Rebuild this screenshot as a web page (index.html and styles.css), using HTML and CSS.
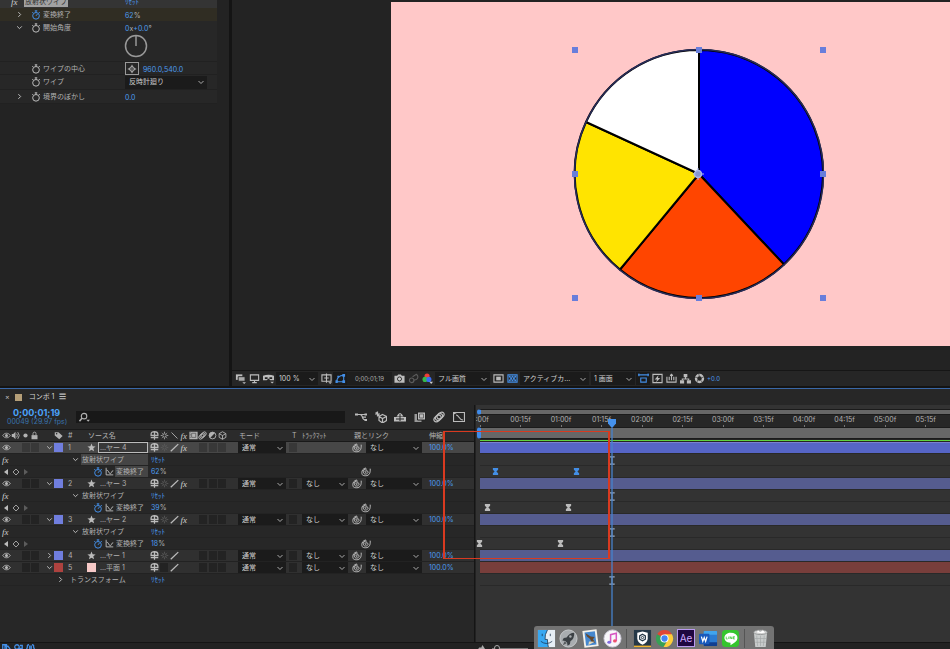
FILE: index.html
```html
<!DOCTYPE html>
<html lang="ja">
<head>
<meta charset="utf-8">
<meta name="viewport" content="width=device-width, initial-scale=1">
<title>コンポ 1</title>
<link rel="stylesheet" href="styles.css">
</head>
<body>
<svg class="sprite" aria-hidden="true">
  <symbol id="right" viewBox="0 0 12 12"><path d="M4 2l4 4-4 4" class="ln bold"/></symbol>
  <symbol id="down" viewBox="0 0 12 12"><path d="M2 4l4 4 4-4" class="ln bold"/></symbol>
  <symbol id="watch" viewBox="0 0 12 12"><circle cx="6" cy="7" r="4" class="ln"/><path d="M4.500 1h3M6 1v2M9.500 2.500l1.200 1.200M1.500 3.500l1-1" class="ln"/></symbol>
  <symbol id="watch-on" viewBox="0 0 12 12"><circle cx="6" cy="7" r="4" class="ln"/><path d="M4.500 1h3M6 1v2M9.500 2.500l1.200 1.200M1.500 3.500l1-1M6 7l2-2.500" class="ln"/></symbol>
  <symbol id="graph" viewBox="0 0 12 12"><path d="M1.500 1v9.500H11M2 4c3 0 3 5 5 5s1-4 4-4" class="ln"/></symbol>
  <symbol id="target" viewBox="0 0 12 12"><circle cx="6" cy="6" r="2.800" class="ln"/><circle cx="6" cy="6" r=".8" fill="currentColor"/><path d="M6 1v3M6 8v3M1 6h3M8 6h3" class="ln"/></symbol>
  <symbol id="eye" viewBox="0 0 12 12"><path d="M1 6c2.500-4 7.500-4 10 0-2.500 4-7.500 4-10 0z" class="ln"/><circle cx="6" cy="6" r="2" fill="currentColor"/></symbol>
  <symbol id="sound" viewBox="0 0 12 12"><path d="M1 4h2l3-3v10L3 8H1z" fill="currentColor"/><path d="M7.500 3.500q2 2.500 0 5M9 1.500q4 4.500 0 9" class="ln"/></symbol>
  <symbol id="dot" viewBox="0 0 12 12"><circle cx="6" cy="6" r="2.800" fill="currentColor"/></symbol>
  <symbol id="lock" viewBox="0 0 12 12"><path d="M2 5.500h8V11H2z" fill="currentColor"/><path d="M4 6V3.500a2 2 0 0 1 4 0V6" class="ln"/></symbol>
  <symbol id="tag" viewBox="0 0 12 12"><path d="M1 1.500h5l5.500 5L7 11 1 6z" fill="currentColor"/><circle cx="3.500" cy="3.700" r="1" fill="#222"/></symbol>
  <symbol id="star" viewBox="0 0 12 12"><path d="M6 0.500l1.500 3.800 4 .2-3.100 2.600 1 4L6 8.900 2.600 11.100l1-4L.5 4.500l4-.2z" fill="currentColor"/></symbol>
  <symbol id="shy" viewBox="0 0 12 12"><path d="M1.500 6V4Q1.500 1 6 1t4.500 3v2z" class="ln bold"/><path d="M6 1v10.500M1 8.700h10" class="ln bold"/></symbol>
  <symbol id="sun" viewBox="0 0 12 12"><circle cx="6" cy="6" r="2.300" class="ln"/><path d="M6 1v1.500M6 9.500V11M1 6h1.500M9.500 6H11M2.500 2.500l1 1M8.500 8.500l1 1M9.500 2.500l-1 1M3.500 8.500l-1 1" class="ln"/></symbol>
  <symbol id="back" viewBox="0 0 12 12"><path d="M2 2l8 8" class="ln"/></symbol>
  <symbol id="slash" viewBox="0 0 12 12"><path d="M1 11L11 1.500" class="ln bold"/></symbol>
  <symbol id="film" viewBox="0 0 12 12"><path d="M.5 1h11v10H.5z" fill="currentColor"/><path d="M3.500 3h5.500v5.500H3.500z" fill="none" stroke="#555"/><path d="M1.700 2v8" stroke="#444" stroke-dasharray="1 1"/></symbol>
  <symbol id="blur" viewBox="0 0 12 12"><g class="ln"><ellipse cx="7.500" cy="4.500" rx="4" ry="2.600" transform="rotate(-40 7.500 4.500)"/><ellipse cx="6" cy="6" rx="4" ry="2.600" transform="rotate(-40 6 6)"/><ellipse cx="4.500" cy="7.500" rx="4" ry="2.600" transform="rotate(-40 4.500 7.500)"/></g></symbol>
  <symbol id="adjust" viewBox="0 0 12 12"><circle cx="6" cy="6" r="4.500" class="ln"/><path d="M9.200 2.800A4.500 4.500 0 0 0 2.800 9.200z" fill="currentColor"/></symbol>
  <symbol id="cube" viewBox="0 0 12 12"><path d="M6 1l4.500 2.500v5L6 11 1.500 8.500v-5zM1.500 3.500L6 6l4.500-2.500M6 6v5" class="ln"/></symbol>
  <symbol id="spiral" viewBox="0 0 12 12"><path d="M6.500 6.200C5.500 7.200 4 6 5 5s4-.5 3.500 1.500S4 9.500 3 7 4 2 7 2.500M11 2c.5 5-1 8.500-5.500 8.500S1 8.500 1 6.500 2.500 1.500 6 1.200" class="ln"/></symbol>
  <symbol id="key" viewBox="0 0 8 8"><path d="M1 0h6v2L5 4l2 2v2H1V6l2-2-2-2z" fill="currentColor"/></symbol>
  <symbol id="ibeam" viewBox="0 0 6 10"><path d="M0 1h6M3 1v8M0 9h6" class="ln"/></symbol>
  <symbol id="prev" viewBox="0 0 12 12"><path d="M9 1.500v9L3 6z" fill="currentColor"/></symbol>
  <symbol id="next" viewBox="0 0 12 12"><path d="M3 1.500v9L9 6z" fill="currentColor"/></symbol>
  <symbol id="diamond" viewBox="0 0 12 12"><path d="M6 1.500L10.500 6 6 10.500 1.500 6z" class="ln"/></symbol>
</svg>

<main class="workspace">
  <section class="effects" aria-label="エフェクトコントロール">
    <div class="fx-list">
      <div class="fx-row fx-title"><i class="fx">fx</i><strong>放射状ワイプ</strong><button class="reset">ﾘｾｯﾄ</button></div>
      <div class="fx-row picked"><button aria-label="展開"><svg class="i7"><use href="#right"/></svg></button><button class="on" aria-label="ストップウォッチ"><svg class="i10"><use href="#watch-on"/></svg></button><span>変換終了</span><button class="val">62<b>%</b></button></div>
      <div class="fx-row"><button aria-label="閉じる"><svg class="i7"><use href="#down"/></svg></button><button aria-label="ストップウォッチ"><svg class="i10"><use href="#watch"/></svg></button><span>開始角度</span><button class="val">0<b>x</b>+0.0<b>°</b></button></div>
      <div class="dial-row"><svg class="dial" viewBox="0 0 24 24" role="img" aria-label="角度"><circle cx="12" cy="12" r="10.500"/><path d="M12 12V2"/></svg></div>
      <div class="fx-row ruled"><span></span><button aria-label="ストップウォッチ"><svg class="i10"><use href="#watch"/></svg></button><span>ワイプの中心</span><span class="point"><button class="target" aria-label="位置を指定"><svg class="i10"><use href="#target"/></svg></button><button class="val">960.0,540.0</button></span></div>
      <div class="fx-row tall ruled"><span></span><button aria-label="ストップウォッチ"><svg class="i10"><use href="#watch"/></svg></button><label for="wipe">ワイプ</label><select id="wipe"><option>反時計廻り</option></select></div>
      <div class="fx-row tall ruled last"><button aria-label="展開"><svg class="i7"><use href="#right"/></svg></button><button aria-label="ストップウォッチ"><svg class="i10"><use href="#watch"/></svg></button><span>境界のぼかし</span><button class="val">0.0</button></div>
    </div>
  </section>

  <section class="viewer" aria-label="コンポジション">
    <div class="stage">
      <svg class="canvas" viewBox="0 0 559 344" preserveAspectRatio="xMidYMid meet" role="img" aria-label="円グラフ">
        <g stroke="#000" stroke-width="2" stroke-linejoin="round">
          <path fill="#00f" d="M308 172V48A124 124 0 0 1 392.900 262.400z"/>
          <path fill="#ff4500" d="M308 172L392.900 262.400A124 124 0 0 1 229 267.500z"/>
          <path fill="#ffe400" d="M308 172L229 267.500A124 124 0 0 1 195 120z"/>
          <path fill="#fff" d="M308 172L195 120A124 124 0 0 1 308 48z"/>
        </g>
        <circle cx="308" cy="172" r="124.500" fill="none" stroke="#272c58" stroke-width="1.500"/>
        <g fill="#687edb"><path d="M181 45h6v6h-6zM305 45h6v6h-6zM429 45h6v6h-6zM181 169h6v6h-6zM429 169h6v6h-6zM181 293h6v6h-6zM305 293h6v6h-6zM429 293h6v6h-6z"/></g>
        <g stroke="#a9b6ea" fill="#8696cf"><path d="M302 172h11M307 166v12"/><circle cx="307" cy="172" r="3.500" stroke-width="1.500"/></g>
      </svg>
    </div>
    <div class="view-bar">
      <button aria-label="常にプレビュー"><svg class="i11" viewBox="0 0 12 12"><path d="M1 1.500h7v6H1z" fill="currentColor"/><path d="M3.500 4h7.500v5H3.500z" fill="#aaa" stroke="#222"/><path d="M8 10h4l-2 2z" fill="currentColor"/></svg></button>
      <button aria-label="モニター"><svg class="i11" viewBox="0 0 12 12"><path d="M1.500 2h9v6h-9zM6 8v2.500M3.500 10.500h5" class="ln"/></svg></button>
      <button aria-label="VR"><svg class="i11" viewBox="0 0 12 12"><path d="M0 3q6-2 12 0v5H8L6 6 4 8H0z" fill="currentColor"/><path d="M2 4.500h3v2H2zM7 4.500h3v2H7z" fill="#222"/><path d="M8 9.500h4l-2 2z" fill="currentColor"/></svg></button>
      <select class="w-zoom" aria-label="倍率"><option>100 %</option></select>
      <button aria-label="グリッド"><svg class="i11" viewBox="0 0 12 12"><path d="M1 2h10v7H1zM6 .5v10M3.500 5.500h5" class="ln"/><path d="M8 10h4l-2 2z" fill="currentColor"/></svg></button>
      <button class="on pressed" aria-label="マスク表示"><svg class="i11" viewBox="0 0 12 12"><path d="M2 9.500Q2 3 9.500 2.500v7z" class="ln"/><path d="M.5 8H3v3H.5zM8 1h3v3H8zM8 8h3v3H8zM2.500 3h2v2h-2z" fill="currentColor"/></svg></button>
      <button class="clock">0;00;01;19</button>
      <button aria-label="スナップショット"><svg class="i11" viewBox="0 0 12 12"><path d="M.5 3h3l1-1.500h3L8.500 3h3v7.500H.5z" fill="currentColor"/><circle cx="6" cy="6.500" r="2.200" fill="#ccc" stroke="#222"/></svg></button>
      <button class="dim" aria-label="スナップショットを表示"><svg class="i11" viewBox="0 0 12 12"><circle cx="4" cy="8" r="2.500" class="ln"/><path d="M5 4l4-2.500a3 3 0 0 1 0 5.500L6 8" class="ln"/></svg></button>
      <button aria-label="チャンネル"><svg class="i11" viewBox="0 0 12 12"><circle cx="5.500" cy="3.300" r="2.800" fill="#ed3d36"/><circle cx="3.300" cy="7" r="2.800" fill="#34b94a"/><circle cx="7.500" cy="7" r="2.800" fill="#3b6cf0"/><path d="M8 9.500h4l-2 2.500z" fill="#ccc"/></svg></button>
      <select class="w-quality" aria-label="解像度"><option>フル画質</option></select>
      <button aria-label="関心領域"><svg class="i11" viewBox="0 0 12 12"><path d="M1 2h10v8H1z" class="ln"/><path d="M3.500 4h5v4h-5z" fill="currentColor"/></svg></button>
      <button class="on" aria-label="透明グリッド"><svg class="i11" viewBox="0 0 12 12"><path d="M1 2h10v8H1z" class="ln"/><path d="M2 3h2v2H2zM5 3h2v2H5zM8 3h2v2H8zM3.500 5h2v2h-2zM6.500 5h2v2h-2zM2 7h2v2H2zM5 7h2v2H5zM8 7h2v2H8z" fill="currentColor"/></svg></button>
      <select class="w-camera" aria-label="カメラ"><option>アクティブカ...</option></select>
      <select class="w-screen" aria-label="画面レイアウト"><option>1 画面</option></select>
      <button class="on pressed" aria-label="ピクセル縦横比"><svg class="i11" viewBox="0 0 12 12"><path d="M0 2h12M1 .5v3M11 .5v3M3 5.500h6V10H3z" class="ln"/></svg></button>
      <button aria-label="高速プレビュー"><svg class="i11" viewBox="0 0 12 12"><path d="M1 1.500h10v9H1z" class="ln"/><path d="M7 2.500L3 7h2.500L4.500 10 9 5.500H6.500z" fill="currentColor"/></svg></button>
      <button aria-label="タイムライン"><svg class="i11" viewBox="0 0 12 12"><path d="M1 4v6h10V4M3.500 8V4M6 8V2M8.500 8V4M4.500 3L6 1.500 7.500 3" class="ln"/></svg></button>
      <button aria-label="フローチャート"><svg class="i11" viewBox="0 0 12 12"><path d="M4 1h4v3.500H4zM0 8h4.500v3.500H0zM7.500 8H12v3.500H7.500z" fill="currentColor"/><path d="M6 4v2.500M2.500 8V6.500h7V8" class="ln"/></svg></button>
      <button aria-label="露出をリセット"><svg class="i11" viewBox="0 0 12 12"><circle cx="6" cy="6" r="3.800" fill="none" stroke="currentColor" stroke-width="2.600"/><path d="M5 .5l1 3.500M11 4L8 5.500M9 10L7.500 8M3 10.500l1-3M.8 4.500L4 5" stroke="#333" stroke-width=".7"/></svg></button>
      <button class="val small">+0.0</button>
    </div>
  </section>
</main>

<section class="timeline" aria-label="タイムライン">
  <div class="tabs"><button aria-label="閉じる">×</button><span class="comp-mark"></span><h1>コンポ 1</h1><button aria-label="メニュー">☰</button></div>
  <div class="panes">
    <div class="outline">
      <div class="tools">
        <div class="time"><strong>0;00;01;19</strong><span>00049 (29.97 fps)</span></div>
        <label class="search"><svg class="i11" viewBox="0 0 12 12"><circle cx="5.500" cy="4.500" r="3" class="ln"/><path d="M3.500 6.500L.5 10" class="ln bold"/><path d="M8 8.500h4l-2 2z" fill="currentColor"/></svg><input type="search" aria-label="レイヤーを検索"></label>
        <div class="tool-icons">
          <button aria-label="ミニフローチャート"><svg class="i12" viewBox="0 0 12 12"><path d="M1 3.500h10M5 3.500q2 0 2.500 3 .5 2.500 3.500 2.500M7 6.200h4" class="ln"/><path d="M0 2.500h3v2H0zM9.500 2.500H12v2H9.500zM9.500 8H12v2H9.500z" fill="currentColor"/></svg></button>
          <button aria-label="ドラフト 3D"><svg class="i12" viewBox="0 0 12 12"><path d="M7.500 3.500L11.500 5.500v4L7.500 12 4 9.500v-4zM4 5.500l3.500 2 4-2M7.500 7.500V12M0 3h5M2.500.5v5M.8 1.200l3.400 3.600" class="ln"/></svg></button>
          <button aria-label="シャイ"><svg class="i12" viewBox="0 0 12 12"><path d="M2.500 5.500q3.500-7 7 0z" fill="currentColor"/><path d="M0 6h12v4.500H0z" fill="currentColor"/><path d="M6 3v7M2 8h8" stroke="#222" fill="none"/></svg></button>
          <button aria-label="フレームブレンド"><svg class="i12" viewBox="0 0 12 12"><path d="M.5 3h7v8h-7z" fill="#999"/><path d="M3.500 1h8v8h-8z" fill="currentColor" stroke="#222"/><path d="M5.500 3h4v4h-4z" fill="none" stroke="#555" stroke-width=".8"/></svg></button>
          <button aria-label="モーションブラー"><svg class="i12"><use href="#blur"/></svg></button>
          <button aria-label="グラフエディター"><svg class="i12" viewBox="0 0 12 12"><path d="M.5 1.500h11v9H.5zM.5 3l3-1.500M3 4c3 0 3 5 7 5" class="ln"/></svg></button>
        </div>
      </div>

      <div class="grid-row head">
        <span class="eyes"><svg class="i9"><use href="#eye"/></svg><svg class="i9"><use href="#sound"/></svg></span>
        <span class="eyes"><svg class="i9"><use href="#dot"/></svg><svg class="i9"><use href="#lock"/></svg></span>
        <span></span><span><svg class="i9"><use href="#tag"/></svg></span><span class="num">#</span><span class="source">ソース名</span>
        <span class="switches"><svg class="i9"><use href="#shy"/></svg><svg class="i9"><use href="#sun"/></svg><svg class="i9"><use href="#back"/></svg><i class="fx">fx</i><svg class="i9"><use href="#film"/></svg><svg class="i9"><use href="#blur"/></svg><svg class="i9"><use href="#adjust"/></svg><svg class="i9"><use href="#cube"/></svg></span>
        <span></span><span class="cap">モード</span><span class="tee">T</span><span>ﾄﾗｯｸﾏｯﾄ</span><span class="parent-cap">親とリンク</span><span class="pct">伸縮</span>
      </div>

      <div class="grid-row layer selected">
        <button aria-label="表示"><svg class="i9"><use href="#eye"/></svg></button><span class="slots"><i></i><i></i></span>
        <button aria-label="閉じる"><svg class="i7"><use href="#down"/></svg></button><span class="swatch"></span><span class="num">1</span><span class="kind"><svg class="i9"><use href="#star"/></svg></span><span class="name boxed">...ヤー 4</span>
        <span class="switches"><button aria-label="シャイ"><svg class="i9"><use href="#shy"/></svg></button><button class="dim" aria-label="コラップス"><svg class="i9"><use href="#sun"/></svg></button><button aria-label="画質"><svg class="i9"><use href="#slash"/></svg></button><button aria-label="エフェクト"><i class="fx">fx</i></button><span></span><i class="slot"></i><i class="slot"></i><i class="slot"></i></span><span></span>
        <select aria-label="モード"><option>通常</option></select><i class="slot tee"></i><span></span><button aria-label="ピックウイップ"><svg class="i10"><use href="#spiral"/></svg></button><select aria-label="親"><option>なし</option></select><button class="val pct">100.0%</button>
      </div>
      <div class="effect-row chosen"><i class="fx">fx</i><button aria-label="閉じる"><svg class="i7"><use href="#down"/></svg></button><span class="label">放射状ワイプ</span><button class="reset">ﾘｾｯﾄ</button></div>
      <div class="key-row chosen"><span class="nav"><button aria-label="前のキー"><svg class="i8"><use href="#prev"/></svg></button><button aria-label="キーを追加"><svg class="i8"><use href="#diamond"/></svg></button><button class="dim" aria-label="次のキー"><svg class="i8"><use href="#next"/></svg></button></span><button class="on" aria-label="ストップウォッチ"><svg class="i10"><use href="#watch-on"/></svg></button><button aria-label="グラフ"><svg class="i9"><use href="#graph"/></svg></button><span class="label">変換終了</span><button class="val">62<b>%</b></button><button aria-label="ピックウイップ"><svg class="i10"><use href="#spiral"/></svg></button></div>

      <div class="grid-row layer">
        <button aria-label="表示"><svg class="i9"><use href="#eye"/></svg></button><span class="slots"><i></i><i></i></span>
        <button aria-label="閉じる"><svg class="i7"><use href="#down"/></svg></button><span class="swatch"></span><span class="num">2</span><span class="kind"><svg class="i9"><use href="#star"/></svg></span><span class="name">...ヤー 3</span>
        <span class="switches"><button aria-label="シャイ"><svg class="i9"><use href="#shy"/></svg></button><button class="dim" aria-label="コラップス"><svg class="i9"><use href="#sun"/></svg></button><button aria-label="画質"><svg class="i9"><use href="#slash"/></svg></button><button aria-label="エフェクト"><i class="fx">fx</i></button><span></span><i class="slot"></i><i class="slot"></i><i class="slot"></i></span><span></span>
        <select aria-label="モード"><option>通常</option></select><i class="slot tee"></i><select aria-label="トラックマット"><option>なし</option></select><button aria-label="ピックウイップ"><svg class="i10"><use href="#spiral"/></svg></button><select aria-label="親"><option>なし</option></select><button class="val pct">100.0%</button>
      </div>
      <div class="effect-row"><i class="fx">fx</i><button aria-label="閉じる"><svg class="i7"><use href="#down"/></svg></button><span class="label">放射状ワイプ</span><button class="reset">ﾘｾｯﾄ</button></div>
      <div class="key-row"><span class="nav"><button aria-label="前のキー"><svg class="i8"><use href="#prev"/></svg></button><button aria-label="キーを追加"><svg class="i8"><use href="#diamond"/></svg></button><button class="dim" aria-label="次のキー"><svg class="i8"><use href="#next"/></svg></button></span><button class="on" aria-label="ストップウォッチ"><svg class="i10"><use href="#watch-on"/></svg></button><button aria-label="グラフ"><svg class="i9"><use href="#graph"/></svg></button><span class="label">変換終了</span><button class="val">39<b>%</b></button><button aria-label="ピックウイップ"><svg class="i10"><use href="#spiral"/></svg></button></div>

      <div class="grid-row layer">
        <button aria-label="表示"><svg class="i9"><use href="#eye"/></svg></button><span class="slots"><i></i><i></i></span>
        <button aria-label="閉じる"><svg class="i7"><use href="#down"/></svg></button><span class="swatch"></span><span class="num">3</span><span class="kind"><svg class="i9"><use href="#star"/></svg></span><span class="name">...ヤー 2</span>
        <span class="switches"><button aria-label="シャイ"><svg class="i9"><use href="#shy"/></svg></button><button class="dim" aria-label="コラップス"><svg class="i9"><use href="#sun"/></svg></button><button aria-label="画質"><svg class="i9"><use href="#slash"/></svg></button><button aria-label="エフェクト"><i class="fx">fx</i></button><span></span><i class="slot"></i><i class="slot"></i><i class="slot"></i></span><span></span>
        <select aria-label="モード"><option>通常</option></select><i class="slot tee"></i><select aria-label="トラックマット"><option>なし</option></select><button aria-label="ピックウイップ"><svg class="i10"><use href="#spiral"/></svg></button><select aria-label="親"><option>なし</option></select><button class="val pct">100.0%</button>
      </div>
      <div class="effect-row"><i class="fx">fx</i><button aria-label="閉じる"><svg class="i7"><use href="#down"/></svg></button><span class="label">放射状ワイプ</span><button class="reset">ﾘｾｯﾄ</button></div>
      <div class="key-row"><span class="nav"><button aria-label="前のキー"><svg class="i8"><use href="#prev"/></svg></button><button aria-label="キーを追加"><svg class="i8"><use href="#diamond"/></svg></button><button class="dim" aria-label="次のキー"><svg class="i8"><use href="#next"/></svg></button></span><button class="on" aria-label="ストップウォッチ"><svg class="i10"><use href="#watch-on"/></svg></button><button aria-label="グラフ"><svg class="i9"><use href="#graph"/></svg></button><span class="label">変換終了</span><button class="val">18<b>%</b></button><button aria-label="ピックウイップ"><svg class="i10"><use href="#spiral"/></svg></button></div>

      <div class="grid-row layer">
        <button aria-label="表示"><svg class="i9"><use href="#eye"/></svg></button><span class="slots"><i></i><i></i></span>
        <button aria-label="展開"><svg class="i7"><use href="#right"/></svg></button><span class="swatch"></span><span class="num">4</span><span class="kind"><svg class="i9"><use href="#star"/></svg></span><span class="name">...ヤー 1</span>
        <span class="switches"><button aria-label="シャイ"><svg class="i9"><use href="#shy"/></svg></button><button class="dim" aria-label="コラップス"><svg class="i9"><use href="#sun"/></svg></button><button aria-label="画質"><svg class="i9"><use href="#slash"/></svg></button><span></span><span></span><i class="slot"></i><i class="slot"></i><i class="slot"></i></span><span></span>
        <select aria-label="モード"><option>通常</option></select><i class="slot tee"></i><select aria-label="トラックマット"><option>なし</option></select><button aria-label="ピックウイップ"><svg class="i10"><use href="#spiral"/></svg></button><select aria-label="親"><option>なし</option></select><button class="val pct">100.0%</button>
      </div>
      <div class="grid-row layer">
        <button aria-label="表示"><svg class="i9"><use href="#eye"/></svg></button><span class="slots"><i></i><i></i></span>
        <button aria-label="閉じる"><svg class="i7"><use href="#down"/></svg></button><span class="swatch red"></span><span class="num">5</span><span class="kind"><i class="solid"></i></span><span class="name">...平面 1</span>
        <span class="switches"><button aria-label="シャイ"><svg class="i9"><use href="#shy"/></svg></button><i class="slot"></i><button aria-label="画質"><svg class="i9"><use href="#slash"/></svg></button><span></span><span></span><i class="slot"></i><i class="slot"></i><i class="slot"></i></span><span></span>
        <select aria-label="モード"><option>通常</option></select><i class="slot tee"></i><select aria-label="トラックマット"><option>なし</option></select><button aria-label="ピックウイップ"><svg class="i10"><use href="#spiral"/></svg></button><select aria-label="親"><option>なし</option></select><button class="val pct">100.0%</button>
      </div>
      <div class="effect-row transform"><span></span><button aria-label="展開"><svg class="i7"><use href="#right"/></svg></button><span class="label">トランスフォーム</span><button class="reset">ﾘｾｯﾄ</button></div>
    </div>

    <div class="tracks">
      <div class="work-area"></div>
      <div class="ruler">
        <span style="--f:0">0:00f</span><span style="--f:15">00:15f</span><span style="--f:30">01:00f</span><span style="--f:45">01:15f</span><span style="--f:60">02:00f</span><span style="--f:75">02:15f</span><span style="--f:90">03:00f</span><span style="--f:105">03:15f</span><span style="--f:120">04:00f</span><span style="--f:135">04:15f</span><span style="--f:150">05:00f</span><span style="--f:165">05:15f</span>
      </div>
      <div class="work-area range"></div>
      <div class="cache"></div>
      <div class="track bar lit"></div>
      <div class="track"><svg class="ibeam" style="--f:49"><use href="#ibeam"/></svg></div>
      <div class="track"><svg class="key on" style="--f:6"><use href="#key"/></svg><svg class="key on" style="--f:36"><use href="#key"/></svg></div>
      <div class="track bar"></div>
      <div class="track"><svg class="ibeam" style="--f:49"><use href="#ibeam"/></svg></div>
      <div class="track"><svg class="key" style="--f:3"><use href="#key"/></svg><svg class="key" style="--f:33"><use href="#key"/></svg></div>
      <div class="track bar"></div>
      <div class="track"><svg class="ibeam" style="--f:49"><use href="#ibeam"/></svg></div>
      <div class="track"><svg class="key" style="--f:0"><use href="#key"/></svg><svg class="key" style="--f:30"><use href="#key"/></svg></div>
      <div class="track bar"></div>
      <div class="track bar red"></div>
      <div class="track"><svg class="ibeam" style="--f:49"><use href="#ibeam"/></svg></div>
      <div class="playhead" style="--f:49"><svg viewBox="0 0 8 8"><path d="M0 0h8v4.500L5 8H3L0 4.500z"/></svg></div>
    </div>
    <div class="callout"></div>
  </div>
  <footer class="status">
    <div class="toggles on"><svg class="i9" viewBox="0 0 12 12"><path d="M1 1h5v10H1zM4 3h4l3 4v4H4z" class="ln bold"/></svg><svg class="i9" viewBox="0 0 12 12"><circle cx="4" cy="4" r="3" class="ln bold"/><path d="M6 6h5v5H6zM8 2h3v3" class="ln bold"/></svg><svg class="i9" viewBox="0 0 12 12"><path d="M4 1Q1 1 2 4L1 6l1 2q-1 3 2 3M8 1q3 0 2 3l1 2-1 2q1 3-2 3M5 2v8M7 2v8" class="ln bold"/></svg></div>
    <div class="zoom"><svg class="mount" viewBox="0 0 7 4"><path d="M0 4l2-2 1 1 1.500-3L7 4z"/></svg><input type="range" min="0" max="100" value="5" aria-label="ズーム"><svg class="mount" viewBox="0 0 7 4"><path d="M0 4l2-2 1 1 1.500-3L7 4z"/></svg></div>
  </footer>
</section>

<nav class="dock" aria-label="Dock">
  <button aria-label="Finder"><svg viewBox="0 0 20 20"><path d="M1 1h18v18H1z" fill="#e6eef5"/><path d="M1 1h10Q8 6 8.500 11h2.500q0 5 1 8H1z" fill="#38a8f2"/><path d="M5.500 5v2.500M14 5v2.500M4 13q6 4.500 12 0M11 1Q8 6 8.500 11H11q0 5 1 8" fill="none" stroke="#19324d" stroke-width=".8"/></svg></button>
  <button aria-label="Launchpad"><svg viewBox="0 0 20 20"><circle cx="10" cy="10" r="9" fill="#a9adb0" stroke="#c8cbcd"/><path d="M16 4q-5 0-8 5l-3 .5L3.500 12l3 .5 2 2 .5 3 2.500-1.500.5-3q4.500-3 4-9z" fill="#3b4044"/><circle cx="12" cy="8" r="1.300" fill="#a9adb0"/><path d="M6 13l-2 4 4-2z" fill="#55595c"/></svg></button>
  <button aria-label="Mail"><svg viewBox="0 0 20 20"><g transform="rotate(-7 10 10)"><path d="M2.500 1h15v18h-15z" fill="#f3f1ea"/><path d="M4.500 3h11v14h-11z" fill="#4688cf"/><path d="M5.500 4l5 4 4 1-2 2 2 4-4-1.500-1-3-3-3z" fill="#65482e"/><path d="M8 13l6 1-7 2.500z" fill="#e4d9bb"/></g></svg></button>
  <button aria-label="iTunes"><svg viewBox="0 0 20 20"><circle cx="10" cy="10" r="9" fill="#f8f7fb" stroke="#ccc9d8"/><path d="M8 14V6l6-1.500v8" fill="none" stroke="#d657c2" stroke-width="1.600"/><ellipse cx="6.500" cy="14" rx="2" ry="1.600" fill="#8069e0"/><ellipse cx="12.500" cy="12.500" rx="2" ry="1.600" fill="#f0506c"/></svg></button>
  <hr>
  <button aria-label="セキュリティ"><svg viewBox="0 0 20 20"><path d="M1 1h18v18H1z" fill="#253847"/><path d="M1 17.500h18V19H1z" fill="#f1b52b"/><path d="M4.500 4l5.500-1.500L15.500 4v6q0 4-5.500 6.500Q4.500 14 4.500 10z" fill="#fff"/><path d="M10 5.500l3 1.700v3.600l-3 1.700-3-1.700V7.200z" fill="none" stroke="#253847" stroke-width="1.300"/><circle cx="10" cy="9" r="1.200" fill="none" stroke="#253847"/></svg></button>
  <button aria-label="Chrome"><svg viewBox="0 0 20 20"><path d="M10 10L2.200 5.500A9 9 0 0 1 17.800 5.500z" fill="#df4736"/><path d="M2.200 5.500A9 9 0 0 0 9 19l4-7.500L10 10z" fill="#37a055"/><path d="M17.800 5.500A9 9 0 0 1 9 19l4.500-7.500L10 5.500z" fill="#fdcd3b"/><circle cx="10" cy="10" r="4.300" fill="#fff"/><circle cx="10" cy="10" r="3.300" fill="#4285f4"/></svg></button>
  <button class="ae">Ae</button>
  <button aria-label="Word"><svg viewBox="0 0 20 20"><rect x="5" y="2" width="14" height="16" rx="1" fill="#2b7cd3"/><path d="M5 3q0-1 1-1h12q1 0 1 1v3H5z" fill="#41a5ee"/><path d="M5 14h14v3q0 1-1 1H6q-1 0-1-1z" fill="#103f91"/><rect x="0" y="5" width="11" height="11" rx="1" fill="#185abd"/><path d="M2.500 8L4 13l1.500-4L7 13l1.500-5" fill="none" stroke="#fff" stroke-width="1.300"/></svg></button>
  <button aria-label="LINE"><svg viewBox="0 0 20 20"><rect x="1" y="1" width="18" height="18" rx="4" fill="#35c52d"/><path d="M10 4c9 0 9 8 4 10.500L10 17v-2.500C1 14 2 4 10 4z" fill="#fff"/><path d="M5.500 8v2.500H7M8.200 8v2.500M9.700 10.500V8l1.800 2.500V8M14.500 8H13v2.500h1.500M13 9.200h1.300" fill="none" stroke="#35c52d" stroke-width=".8"/></svg></button>
  <hr>
  <button aria-label="ゴミ箱"><svg viewBox="0 0 20 20"><path d="M3 3h14l-1.500 16h-11z" fill="#c8cbcb"/><ellipse cx="10" cy="3.500" rx="7" ry="2.300" fill="#ececec" stroke="#909494"/><path d="M5 4l2.500-3 2 2 3-2 3 3-4 1z" fill="#fff" stroke="#aaa" stroke-width=".6"/><path d="M6 7l1 11M10 7v11M14 7l-1 11M4 10h12M4.500 14h11" stroke="#a3a8a8" stroke-width=".7"/></svg></button>
</nav>
</body>
</html>
```

FILE: styles.css
```css
* { box-sizing: border-box; }

body {
  margin: 0;
  height: 100vh;
  display: flex;
  flex-direction: column;
  position: relative;
  overflow: hidden;
  background: #141414;
  color: #b2b2b2;
  font: 7px/10px Inter, "Noto Sans CJK JP", sans-serif;
}

.sprite { position: absolute; width: 0; height: 0; }
.ln { fill: none; stroke: currentColor; stroke-width: 1.2; }
.bold { stroke-width: 1.7; }
svg { display: block; flex: none; }
.i7 { width: 7px; height: 7px; }
.i8 { width: 8px; height: 8px; }
.i9 { width: 9px; height: 9px; }
.i10 { width: 10px; height: 10px; }
.i11 { width: 11px; height: 11px; }
.i12 { width: 12px; height: 12px; }

button {
  display: flex;
  align-items: center;
  justify-content: center;
  margin: 0;
  padding: 0;
  border: 0;
  background: none;
  color: #bcbcbc;
  font: inherit;
}
.on { color: #438ee6; }
.dim { color: #5c5c5c; }
.val, .reset { justify-content: flex-start; color: #4c9bee; white-space: nowrap; }
.val b { font-weight: 400; color: #b2b2b2; }
.small { font-size: 6px; }
.fx { font: italic 9px/10px "Liberation Serif", serif; color: #d0d0d0; }

select {
  appearance: none;
  min-width: 0;
  margin: 0;
  padding: 0 10px 0 4px;
  border: 0;
  border-radius: 0;
  background: #1b1b1b url("data:image/svg+xml,%3Csvg xmlns='http://www.w3.org/2000/svg' viewBox='0 0 6 6'%3E%3Cpath d='M.5 2L3 4.500 5.500 2' fill='none' stroke='%23aaa'/%3E%3C/svg%3E") no-repeat right 3px center / 6px 6px;
  color: #cfcfcf;
  font: inherit;
}

/* Upper panels */
.workspace { flex: 1; min-height: 0; display: flex; gap: 3px; padding-bottom: 2px; }
.effects { flex: 0 0 229px; overflow: hidden; background: #232323; }
.fx-list { margin: -5px 12px 0 0; }
.fx-row {
  display: grid;
  grid-template-columns: 29px 14px 82px 1fr;
  align-items: center;
  height: 13px;
  background: #272727;
}
.fx-row > button:first-child { padding-left: 10px; }
.fx-title { grid-template-columns: 24px 101px 1fr; background: #343434; }
.fx-title .fx { padding-left: 11px; }
.fx-title strong { justify-self: start; padding: 0 1px; background: #a2a2a2; color: #333; font-weight: 400; }
.picked { background: #302d23; }
.fx-row .val { padding-top: 3px; }
.dial-row { display: flex; height: 27px; padding-left: 124px; background: #272727; }
.dial { width: 24px; height: 24px; fill: none; stroke: #999; stroke-width: 1.5; }
.ruled { border-top: 1px solid #212121; }
.tall { height: 15px; }
.last { border-bottom: 1px solid #212121; }
.fx-row select { width: 82px; height: 13px; }
.point { display: flex; align-items: center; gap: 4px; }
.target { width: 14px; height: 13px; border: 1px solid #999; }

.viewer { flex: 1; min-width: 0; display: flex; flex-direction: column; background: #232323; }
.stage { flex: 1; min-height: 0; padding: 2px 0 24px 159px; }
.canvas { width: 100%; height: 100%; background: #ffc8c8; }
.view-bar {
  display: flex;
  align-items: center;
  height: 16px;
  padding-left: 1px;
  border-top: 1px solid #161616;
  background: #262626;
}
.view-bar button { flex: none; width: 14px; height: 13px; }
.view-bar select { flex: none; height: 13px; margin: 0 1px; padding-left: 3px; }
.view-bar .pressed { background: #1a1a1a; }
.view-bar .clock { width: 45px; background: #1e1e1e; font-size: 6px; color: #aaa; }
.view-bar .small { width: auto; padding-left: 1px; }
.view-bar .w-zoom { width: 42px; }
.view-bar .w-quality { width: 55px; }
.view-bar .w-camera { width: 69px; }
.view-bar .w-screen { width: 44px; }

/* Timeline */
.timeline { flex: none; display: flex; flex-direction: column; border-top: 1px solid #3a68a8; background: #272727; }
.tabs { display: flex; align-items: center; gap: 5px; height: 16px; padding-left: 5px; }
.comp-mark { width: 7px; height: 7px; background: #b49e78; }
.tabs h1 { margin: 0; padding-left: 2px; font: inherit; color: #d5d5d5; }
.panes { position: relative; display: grid; grid-template-columns: minmax(475px, 1fr) 1fr; min-height: 237px; }
.outline { border-right: 1px solid #151515; }

.tools { display: flex; align-items: center; height: 24px; }
.time { flex: 0 0 76px; padding-left: 7px; color: #3972ad; white-space: nowrap; line-height: 9px; }
.time strong { display: block; padding-left: 6px; font: bold 9px/9px Inter, sans-serif; color: #4ba3fa; }
.search { flex: 1; display: flex; align-items: center; height: 12px; padding-left: 3px; background: #181818; }
.search input { flex: 1; min-width: 0; height: 10px; border: 0; padding: 0; background: none; color: #ccc; font: inherit; }
.tool-icons { flex: none; display: flex; justify-content: space-between; width: 129px; padding: 0 9px 0 10px; }

.grid-row {
  display: grid;
  grid-template-columns: 20px 24px 10px 10px 20px 14px 52px 77px 11px 48px 16px 46px 18px 56px 1fr;
  align-items: center;
  height: 12px;
}
.head { height: 13px; border-top: 1px solid #191919; border-bottom: 1px solid #191919; background: #2b2b2b; white-space: nowrap; }
.head .eyes { display: flex; padding-left: 2px; }
.head .eyes + .eyes { padding-left: 1px; }
.source { grid-column: span 2; padding-left: 4px; }
.parent-cap { grid-column: span 2; padding-left: 6px; }
.cap { padding-left: 1px; }
.head .tee { padding-left: 6px; }
.num { padding-left: 4px; }
.switches { display: grid; grid-template-columns: repeat(8, 1fr); place-items: center; }
.layer { border-bottom: 1px solid #222; background: #303030; }
.selected { background: #474747; }
.layer > button:first-child { padding-right: 7px; }
.slots { display: flex; gap: 1px; padding-left: 2px; }
.slots i, .slot { width: 8px; height: 9px; background: #232323; }
.selected .slots i, .selected .slot { background: #383838; }
.slot.tee { margin-left: 3px; }
.swatch { width: 9px; height: 9px; background: #707ede; }
.swatch.red { background: #ad423f; }
.kind { display: flex; justify-content: center; color: #bbb; }
.solid { width: 9px; height: 9px; background: #f6c9c7; }
.name { padding: 0 2px; }
.boxed { height: 11px; margin-right: 2px; padding: 0 1px; border: 1px solid #bbb; background: #383838; line-height: 9px; }
.layer select { height: 11px; }
.pct { padding-left: 7px; }

.effect-row, .key-row { display: grid; align-items: center; height: 12px; border-bottom: 1px solid #232323; }
.effect-row { grid-template-columns: 69px 12px 70px 1fr; }
.effect-row .fx, .nav { padding-left: 2px; }
.key-row { grid-template-columns: 92px 11px 12px 36px 210px 10px; }
.nav { display: flex; gap: 2px; }
.label { align-self: stretch; margin-right: 3px; padding-left: 1px; line-height: 11px; white-space: nowrap; }
.chosen .label { background: #454545; }
.transform { grid-template-columns: 54px 12px 85px 1fr; }
.transform .label { padding-left: 4px; }

/* Time tracks: --f is a frame number on a 174-frame span */
.tracks { position: relative; min-width: 0; padding: 4px 0 0 4px; overflow: hidden; background: #333; border-left: 1px solid #222; }
.work-area { height: 6px; border: 1px solid #1b1b1b; border-right: 0; border-left: 4px solid #3f8bea; border-radius: 3px 0 0 3px; margin-left: -3px; background: #676767; }
.range { height: 12px; }
.cache { height: 3px; border: solid #242424; border-width: 1px 0; background: #5fd43f; }
.ruler { position: relative; height: 12px; background: #272727; }
.ruler span { position: absolute; left: calc(var(--f) / 174 * 100%); width: 40px; margin-left: -20px; padding-bottom: 2px; text-align: center; background: linear-gradient(#777, #777) center bottom / 1px 2px no-repeat; }
.track { position: relative; height: 12px; border-bottom: 1px solid #292929; }
.bar { background: #555c8f; }
.bar.lit { background: #5665c6; border-top: 1px solid #7982d0; }
.bar.red { background: #783e3b; }
.key, .ibeam { position: absolute; top: 2px; left: calc(var(--f) / 174 * 100%); color: #bbb; }
.key { width: 7px; height: 7px; margin-left: -4px; }
.key.on { color: #438ee6; }
.ibeam { width: 6px; height: 9px; margin-left: -3px; color: #9caabd; }
.playhead { position: absolute; top: 14px; bottom: 0; left: calc(4px + var(--f) / 174 * (100% - 4px)); width: 2px; margin-left: -1px; background: rgb(70 130 205 / 65%); }
.playhead svg { width: 8px; height: 8px; margin-left: -3px; fill: #4591ec; }
.callout { position: absolute; top: 26px; left: 443px; width: 167px; height: 128px; border: 2px solid #d93a20; border-bottom-width: 1px; border-top-width: 1px; }

.status { display: grid; grid-template-columns: minmax(475px, 1fr) 1fr; height: 7px; overflow: hidden; border-top: 1px solid #151515; background: #222; }
.toggles { display: flex; gap: 3px; padding: 1px 0 0 2px; }
.zoom { display: flex; align-items: flex-start; gap: 7px; padding: 2px 0 0 3px; color: #aaa; }
.mount { width: 7px; height: 4px; fill: #aaa; }
.zoom input { appearance: none; width: 36px; height: 6px; margin: 0; background: linear-gradient(#777, #777) center / 100% 1px no-repeat; }
.zoom input::-webkit-slider-thumb { appearance: none; width: 6px; height: 6px; border: 1px solid #aaa; border-radius: 50%; background: #222; }

.dock {
  position: absolute;
  bottom: 0;
  left: 534px;
  display: flex;
  align-items: center;
  height: 23px;
  padding: 1px 3px 0 1px;
  border-radius: 3px 3px 0 0;
  background: #737373;
}
.dock button { width: 22px; height: 22px; }
.dock svg { width: 19px; height: 19px; }
.dock hr { width: 1px; height: 19px; margin: 0 4px 0 3px; border: 0; background: #555; }
.dock .ae { width: 18px; height: 18px; margin: 0 2px; border: 1px solid #b99af0; background: #1f0740; color: #cfaaff; font-size: 10px; }
```
